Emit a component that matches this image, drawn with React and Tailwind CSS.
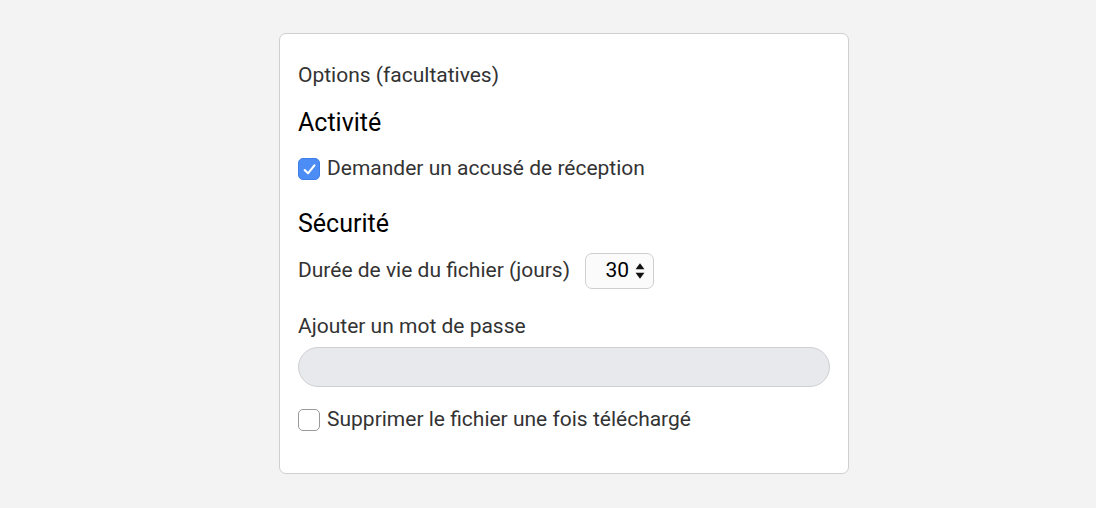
import React, { useState } from 'react';

const Checkbox = ({ checked, onChange }) => (
    <button
        type="button"
        onClick={onChange}
        className={
            checked
                ? 'w-[22px] h-[22px] rounded-[5px] bg-[#4b8cf5] border border-[#3f7fe8] flex items-center justify-center shrink-0'
                : 'w-[22px] h-[22px] rounded-[5px] bg-white border border-[#9a9a9a] shrink-0'
        }
    >
        {checked && (
            <svg width="15" height="15" viewBox="0 0 14 14" fill="none">
                <path d="M2.5 7.5 L5.6 10.6 L11.6 3.2" stroke="white" strokeWidth="2" strokeLinecap="round" strokeLinejoin="round" />
            </svg>
        )}
    </button>
);

const App = () => {
    const [ack, setAck] = useState(true);
    const [deleteAfter, setDeleteAfter] = useState(false);

    return (
        <div className="w-full h-[508px] bg-[#f3f3f3] flex justify-center pl-[32px] pt-[33px] font-['Roboto',sans-serif]">
            <div className="w-[570px] h-[441px] bg-white border border-[#cfcfcf] rounded-[7px] px-[18px] pt-[27px] flex flex-col">
                {/* Options */}
                <p className="text-[21px] leading-[28px] text-[#333]">Options (facultatives)</p>

                <h3 className="mt-[19px] text-[25px] leading-[30px] text-black">Activité</h3>
                <label className="mt-[17px] flex items-center gap-[7px] h-[28px] text-[21px] text-[#333]">
                    <Checkbox checked={ack} onChange={() => setAck(!ack)} />
                    <span>Demander un accusé de réception</span>
                </label>

                <h3 className="mt-[26px] text-[25px] leading-[30px] text-black">Sécurité</h3>
                <div className="mt-[14px] flex items-center gap-[15px] h-[36px] text-[21px] text-[#333]">
                    <span>Durée de vie du fichier (jours)</span>
                    <div className="h-[36px] w-[69px] border border-[#cfcfcf] rounded-[7px] bg-[#fbfbfb] flex items-center justify-end pr-[8px] gap-[6px]">
                        <span className="text-[21px] text-black">30</span>
                        <svg width="10" height="18" viewBox="0 0 9 16">
                            <path d="M4.5 1 L8.5 6.5 L0.5 6.5 Z" fill="#111" />
                            <path d="M4.5 15 L8.5 9.5 L0.5 9.5 Z" fill="#111" />
                        </svg>
                    </div>
                </div>

                <p className="mt-[23px] text-[21px] leading-[28px] text-[#333]">Ajouter un mot de passe</p>
                <input
                    type="password"
                    className="mt-[7px] h-[40px] w-full rounded-full bg-[#e8e9ec] border border-[#cfd0d3] px-4 outline-none"
                />

                <label className="mt-[19px] flex items-center gap-[7px] h-[28px] text-[21px] text-[#333]">
                    <Checkbox checked={deleteAfter} onChange={() => setDeleteAfter(!deleteAfter)} />
                    <span>Supprimer le fichier une fois téléchargé</span>
                </label>
            </div>
        </div>
    );
};

export default App;
